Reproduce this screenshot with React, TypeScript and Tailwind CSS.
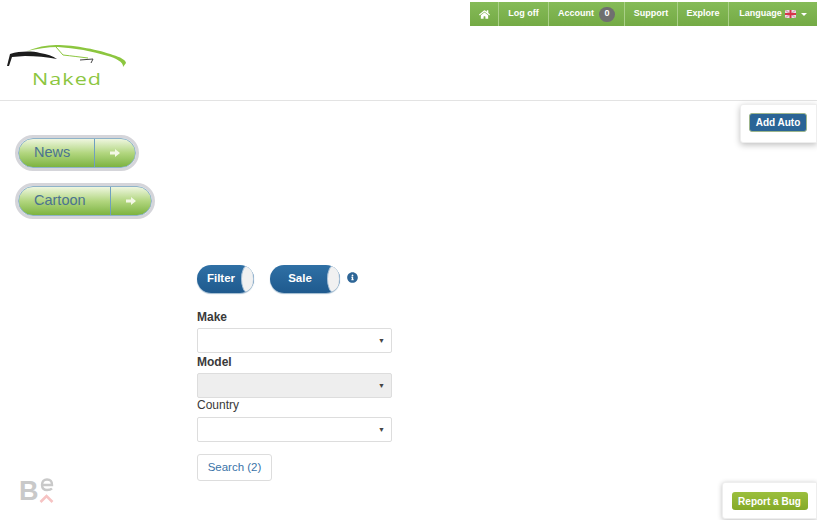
import { FaHome, FaInfoCircle } from "react-icons/fa";

const sans = "font-['Liberation_Sans',Arial,sans-serif]";

function NavItem({ children, className = "" }: { children: React.ReactNode; className?: string }) {
  return (
    <a className={`flex h-full items-center justify-center border-l border-[#a9cf87] text-[9px] font-bold text-white first:border-l-0 ${className}`}>
      {children}
    </a>
  );
}

function Flag() {
  return (
    <svg width="11" height="8" viewBox="0 0 11 8" className="ml-[3px]">
      <rect width="11" height="8" fill="#e8dfe6" />
      <path d="M0 0L11 8M11 0L0 8" stroke="#d9a3b0" strokeWidth="1.2" />
      <path d="M5.5 0V8M0 4H11" stroke="#d8344a" strokeWidth="2" />
    </svg>
  );
}

function Logo() {
  return (
    <div className="relative h-[43px] w-[130px]">
      <svg width="130" height="30" viewBox="0 0 130 30" className="block">
        <path d="M27 8C37 4 46 2 56 2C75 2 100 7 113 12C120 14 126 17 126 20L123 24C124 19 115 15 108 13C92 8 75 5 58 4C47 4 37 6 27 8Z" fill="#8cc63f" />
        <path d="M56 4L63 12C72 13 80 14 88 15" fill="none" stroke="#8cc63f" strokeWidth="1" />
        <path d="M7 23L10 11C20 8 32 8 40 10C47 11 53 13 57 16C47 14 36 13 25 13L12 14L9 23Z" fill="#1c1c1c" />
        <path d="M80 17L93 16L91 20" fill="none" stroke="#444444" strokeWidth="1" />
      </svg>
      <span className="absolute left-[32px] top-[27px] origin-left scale-x-[1.27] font-['Open_Sans',sans-serif] text-[17px] leading-[18px] tracking-[0.8px] text-[#8cc63f]">
        Naked
      </span>
    </div>
  );
}

function PillLink({ label, width, split }: { label: string; width: string; split: string }) {
  return (
    <div className={`box-border flex h-[36px] items-stretch rounded-full border-[3px] border-[#d5d5da] ${width}`}>
      <div className="flex flex-1 items-stretch overflow-hidden rounded-full border border-[#8fb3c9] bg-gradient-to-b from-[#eff6df] via-[#b2d67f] to-[#7db33f]">
        <div className={`flex items-center pl-[15px] text-[14.5px] text-[#4b7390] ${split}`}>{label}</div>
        <div className="flex flex-1 items-center justify-center border-l border-[#6f9fc0]">
          <svg width="10" height="8" viewBox="0 0 10 8">
            <path d="M0 2.5H5V0L10 4L5 8V5.5H0Z" fill="#f3f8e6" />
          </svg>
        </div>
      </div>
    </div>
  );
}

function Toggle({ label, width, textPad }: { label: string; width: string; textPad: string }) {
  return (
    <div className={`relative flex h-[28px] items-center overflow-hidden rounded-full bg-gradient-to-b from-[#2f70a5] to-[#1f5a8e] shadow-[0_1px_1px_#9db8ce] ${width}`}>
      <span className={`flex-1 text-center text-[11.5px] font-bold text-white ${textPad}`}>{label}</span>
      <span className="absolute right-0 top-0 h-[28px] w-[13px] rounded-[50%] border border-[#a9c2d8] bg-[#f1f1f1]" />
    </div>
  );
}

function Field({ label, disabled }: { label: string; disabled?: boolean }) {
  const isCountry = label === "Country";
  return (
    <div>
      <div className={`text-[12px] text-[#3a3a3a] ${isCountry ? "h-[19px] leading-[15px]" : "h-[20px] leading-[18px] font-bold"}`}>{label}</div>
      <div className={`flex h-[25px] w-[195px] items-center justify-end rounded-[2px] border border-[#dddddd] pr-[6px] ${disabled ? "bg-[#eeeeee]" : "bg-white"}`}>
        <span className="text-[7px] leading-none text-[#444444]">▼</span>
      </div>
    </div>
  );
}

export default function App() {
  return (
    <div className={`relative h-[520px] w-[817px] overflow-hidden bg-white ${sans}`}>
      <header className="h-[101px] border-b border-[#e3e3e3]">
        <div className="flex justify-end pt-[2px]">
          <nav className="flex h-[24px] w-[347px] bg-gradient-to-b from-[#86bb58] to-[#74aa45]">
            <NavItem className="w-[28px]"><FaHome className="h-[11px] w-[11px]" /></NavItem>
            <NavItem className="w-[50px]">Log off</NavItem>
            <NavItem className="w-[76px]">
              Account
              <span className="ml-[5px] flex h-[15px] w-[16px] items-center justify-center rounded-full bg-[#6f6f6f]">0</span>
            </NavItem>
            <NavItem className="w-[53px]">Support</NavItem>
            <NavItem className="w-[51px]">Explore</NavItem>
            <NavItem className="flex-1">
              Language<Flag />
              <span className="ml-[5px] mt-[1px] border-x-[3px] border-t-[3px] border-x-transparent border-t-white" />
            </NavItem>
          </nav>
        </div>
        <div className="pt-[17px]">
          <Logo />
        </div>
      </header>

      <div className="flex flex-col gap-[12px] pl-[15px] pt-[34px]">
        <PillLink label="News" width="w-[124px]" split="w-[75px]" />
        <PillLink label="Cartoon" width="w-[140px]" split="w-[91px]" />
      </div>

      <main className="pl-[197px] pt-[46px]">
        <div className="flex items-start">
          <Toggle label="Filter" width="w-[57px]" textPad="pr-[9px]" />
          <div className="ml-[16px]"><Toggle label="Sale" width="w-[70px]" textPad="pr-[10px]" /></div>
          <FaInfoCircle className="ml-[7px] mt-[7px] h-[11px] w-[11px] text-[#2d6596]" />
        </div>
        <div className="mt-[15px]">
          <Field label="Make" />
          <Field label="Model" disabled />
          <Field label="Country" />
        </div>
        <button className="mt-[12px] block h-[27px] w-[75px] rounded-[3px] border border-[#dddddd] bg-white text-[11.5px] text-[#3a73a8]">
          Search (2)
        </button>
      </main>

      <div className="absolute left-[19px] top-[478px] h-[25px] w-[35px]">
        <span className="absolute left-0 top-[1px] text-[27px] font-bold leading-[25px] text-[#c9c9c9]">B</span>
        <svg width="14" height="16" viewBox="0 0 14 16" className="absolute left-[21px] top-[0px]">
          <path d="M2 7H12C12 3 10 1.500 7 1.500C4 1.500 2 3.500 2 7C2 10.500 4 12 7 12C9 12 11 11.500 12 10.500" fill="none" stroke="#c9c9c9" strokeWidth="2.400" />
        </svg>
        <svg width="15" height="10" viewBox="0 0 15 10" className="absolute left-[20px] top-[15px]">
          <path d="M1.500 9L7.500 3L13.500 9" fill="none" stroke="#f6c3c3" strokeWidth="2.600" />
        </svg>
      </div>

      <div className="absolute right-0 top-[104px] flex h-[39px] w-[77px] items-center justify-center rounded-l-[3px] border border-[#eeeeee] bg-white shadow-[0_2px_6px_rgba(0,0,0,0.25)]">
        <button className="ml-[-1px] mt-[-2px] h-[19px] w-[58px] rounded-[3px] border border-[#9db58c] bg-[#2a6496] text-[10px] font-bold text-white">Add Auto</button>
      </div>

      <div className="absolute right-0 top-[482px] flex h-[37px] w-[95px] items-center justify-center rounded-l-[3px] border border-[#eeeeee] bg-white shadow-[0_1px_5px_rgba(0,0,0,0.25)]">
        <button className="mt-[1px] h-[18px] w-[76px] rounded-[3px] bg-gradient-to-b from-[#9bbf3d] to-[#84aa28] text-[10px] font-bold text-white">Report a Bug</button>
      </div>
    </div>
  );
}
